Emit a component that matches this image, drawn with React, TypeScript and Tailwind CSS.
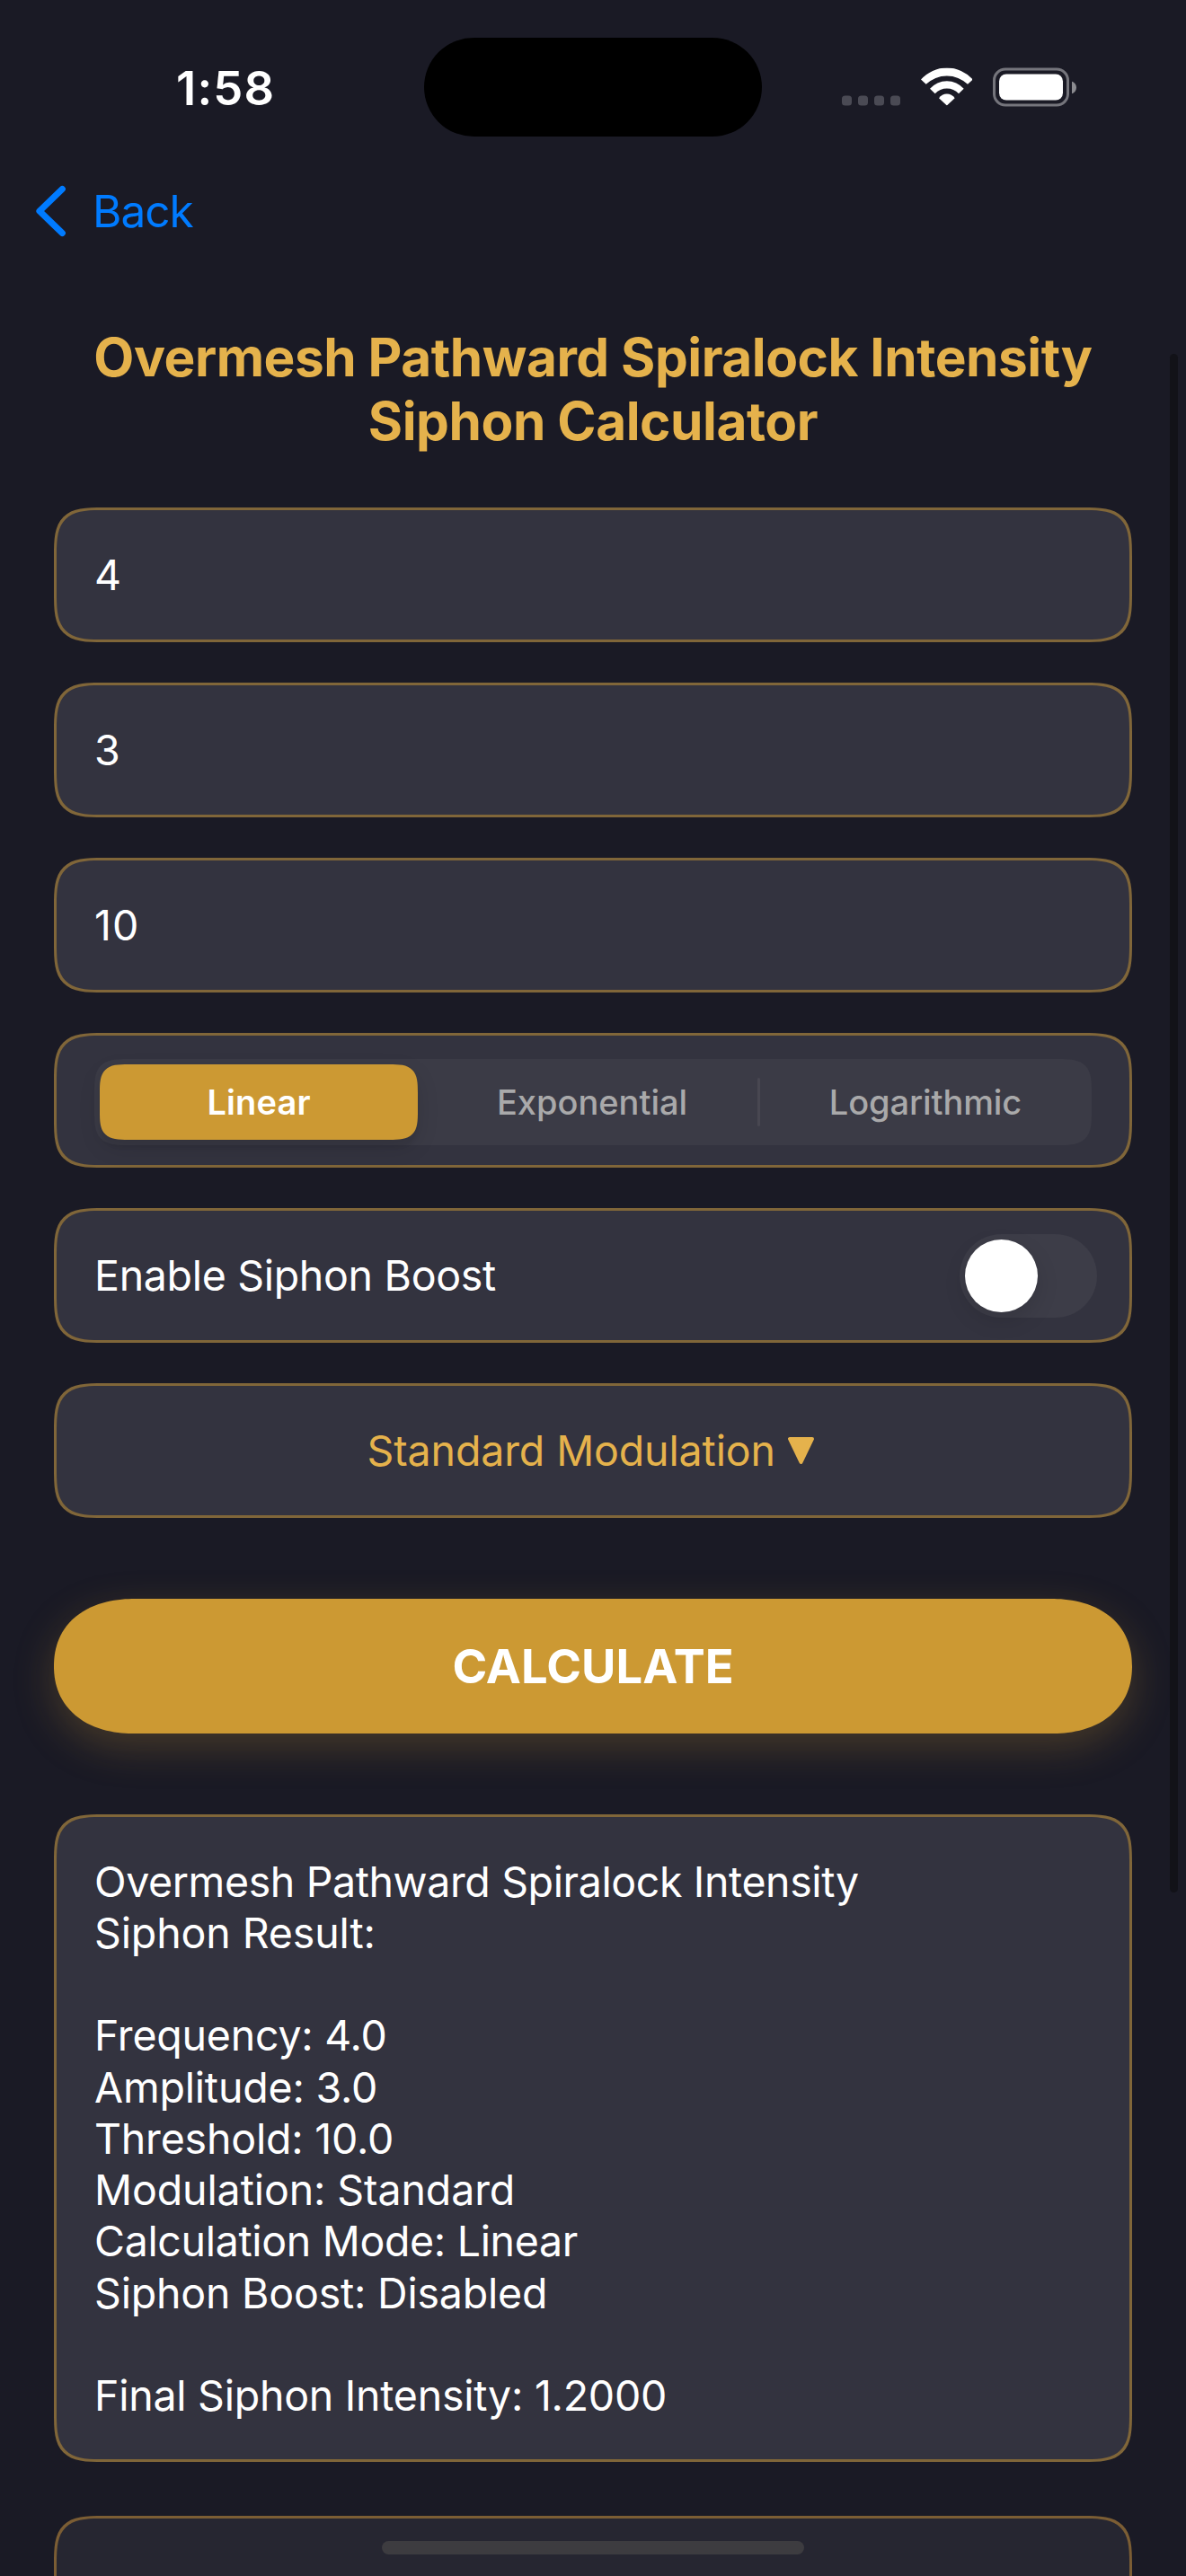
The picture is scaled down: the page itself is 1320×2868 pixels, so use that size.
import type { ReactNode } from "react";

const resultLines: { text: string; tracking: string }[] = [
  { text: "Overmesh Pathward Spiralock Intensity", tracking: "tracking-[-0.383px]" },
  { text: "Siphon Result:", tracking: "tracking-[-0.12px]" },
  { text: "", tracking: "" },
  { text: "Frequency: 4.0", tracking: "tracking-[-0.22px]" },
  { text: "Amplitude: 3.0", tracking: "tracking-[-0.19px]" },
  { text: "Threshold: 10.0", tracking: "tracking-[-0.198px]" },
  { text: "Modulation: Standard", tracking: "tracking-[-0.1px]" },
  { text: "Calculation Mode: Linear", tracking: "tracking-[-0.33px]" },
  { text: "Siphon Boost: Disabled", tracking: "tracking-[-0.202px]" },
  { text: "", tracking: "" },
  { text: "Final Siphon Intensity: 1.2000", tracking: "tracking-[-0.252px]" },
];

function Card({ className = "", children }: { className?: string; children?: ReactNode }) {
  return (
    <div
      className={`flex shrink-0 rounded-[55px] border-[3px] border-[#806639] bg-[#33333f] [corner-shape:superellipse(1.7)] ${className}`}
    >
      {children}
    </div>
  );
}

function Field({ value }: { value: string }) {
  return <Card className="h-[150px] items-center pt-[2px] pl-[42px] tracking-[1px]">{value}</Card>;
}

function StatusBar() {
  return (
    <header className="grid h-[194px] shrink-0 grid-cols-[472px_376px_472px] items-center">
      <div className="pt-[2px] pl-[196px] text-[52.5px] leading-none font-semibold tracking-[1.2px]">1:58</div>
      <div className="h-[110px] rounded-full bg-black" />
      <div className="flex h-[43px] -translate-y-[0.5px] items-end pl-[89px]">
        <div className="mb-px flex gap-[7px]">
          {[0, 1, 2, 3].map((dot) => (
            <span key={dot} className="size-[11px] rounded-[3.5px] bg-[#4a4a54]" />
          ))}
        </div>
        <svg className="mb-px ml-[22.5px] h-[42px] w-[57.7px]" viewBox="434 105 173 126" fill="white">
          <path d="M434 144A115.4 115.4 0 0 1 607 144L590 160A100 100 0 0 0 451 160Z" />
          <path d="M464 175A74.4 74.4 0 0 1 577 175L560 191A54.4 54.4 0 0 0 481 191Z" />
          <path d="M494 206A32 32 0 0 1 547 206L520.5 231Z" />
        </svg>
        <div className="ml-[23px] h-[43px] w-[85px] rounded-[14px] border-[3px] border-[#75757c] p-[4px]">
          <div className="h-full rounded-[8px] bg-white" />
        </div>
        <svg className="mb-[14px] ml-[3px] h-[14px] w-[5px]" viewBox="0 0 5 14" fill="#8b8b90">
          <path d="M0 0C3 1.2 5 3.8 5 7S3 12.8 0 14Z" />
        </svg>
      </div>
    </header>
  );
}

function ModePicker() {
  return (
    <Card className="h-[150px] items-center pt-[4px] pl-[42px]">
      <div className="relative grid h-[96px] w-[1110px] grid-cols-3 rounded-[38px] bg-[#3b3b46] text-[38px] leading-none font-medium text-[#a9a9aa] [corner-shape:superellipse(1.7)]">
        <div className="p-[6px] pr-[10px]">
          <div className="flex h-full items-center justify-center rounded-[32px] bg-[#cc9933] font-semibold tracking-[0.13px] text-white shadow-[0_9px_24px_rgba(0,0,0,0.12),0_9px_3px_rgba(0,0,0,0.04)] [corner-shape:superellipse(1.7)]">
            Linear
          </div>
        </div>
        <div className="flex items-center justify-center pr-[2px]">Exponential</div>
        <div className="flex items-center justify-center tracking-[-0.1px]">Logarithmic</div>
        <div className="absolute top-[21px] left-[738px] h-[54px] w-[3px] rounded-full bg-[#484751]" />
      </div>
    </Card>
  );
}

function BoostToggle() {
  return (
    <Card className="h-[150px] items-center justify-between pr-[36px] pl-[42px]">
      <span className="pt-px tracking-[-0.316px]">Enable Siphon Boost</span>
      <div className="h-[93px] w-[153px] rounded-full bg-[#3d3d48] p-[6px]">
        <div className="size-[81px] rounded-full bg-white shadow-[0_9px_24px_rgba(0,0,0,0.13)]" />
      </div>
    </Card>
  );
}

export default function App() {
  return (
    <main className="relative flex h-[2868px] w-[1320px] flex-col overflow-hidden bg-[#1a1a25] font-[Inter,sans-serif] text-white">
      <StatusBar />

      <nav className="flex h-[82px] shrink-0 items-center pl-[40px] text-[49.5px] leading-none tracking-[-0.95px] text-[#007bff]">
        <svg className="h-[58px] w-[34px]" viewBox="0 0 34 58" fill="none" stroke="currentColor" strokeWidth="7.2" strokeLinecap="round" strokeLinejoin="round">
          <path d="M29.3 4.5L4 29L29.3 53.5" />
        </svg>
        <span className="ml-[29px] pt-px">Back</span>
      </nav>

      <div className="flex shrink-0 flex-col px-[60px] pt-[86px] text-[46.5px] leading-[57.27px]">
        <h1 className="flex flex-col items-center text-[58.5px] leading-[71px] font-bold whitespace-nowrap text-[#e5b24c]">
          <span className="tracking-[-0.472px]">Overmesh Pathward Spiralock Intensity</span>
          <span className="tracking-[-0.443px]">Siphon Calculator</span>
        </h1>

        <div className="mt-[61px] flex flex-col gap-[45px]">
          <Field value="4" />
          <Field value="3" />
          <Field value="10" />
          <ModePicker />
          <BoostToggle />
          <Card className="h-[150px] items-center justify-center pr-[5.5px] text-[#e5b24c]">
            <span className="pt-px tracking-[-0.128px]">Standard Modulation</span>
            <svg className="ml-[14px] h-[30px] w-[29px]" viewBox="0 0 29 30" fill="currentColor" stroke="currentColor" strokeWidth="4" strokeLinejoin="round">
              <path d="M2 2H27L14.5 28Z" />
            </svg>
          </Card>
        </div>

        <button className="mt-[90px] h-[150px] rounded-[90px/75px] bg-[#cc9933] text-[52.5px] leading-none font-bold text-white shadow-[0_15px_45px_rgba(204,153,51,0.25)] [corner-shape:superellipse(1.15)]">
          CALCULATE
        </button>

        <Card className="mt-[90px] h-[721px] flex-col pt-[43.5px] pl-[42px] whitespace-pre">
          {resultLines.map((line, i) => (
            <p key={i} className={`h-[57.27px] shrink-0 ${line.tracking}`}>
              {line.text}
            </p>
          ))}
        </Card>

        <div className="mt-[60px] h-[200px] shrink-0 rounded-[55px] border-[3px] border-[#7b5d34] bg-[#262631] [corner-shape:superellipse(1.7)]" />
      </div>

      <div className="absolute top-[394px] left-[1302px] h-[1713px] w-[9px] rounded-full bg-[#121218]" />
      <div className="absolute top-[2829px] left-[425px] h-[15px] w-[470px] rounded-full bg-[#3d3c40]" />
    </main>
  );
}
